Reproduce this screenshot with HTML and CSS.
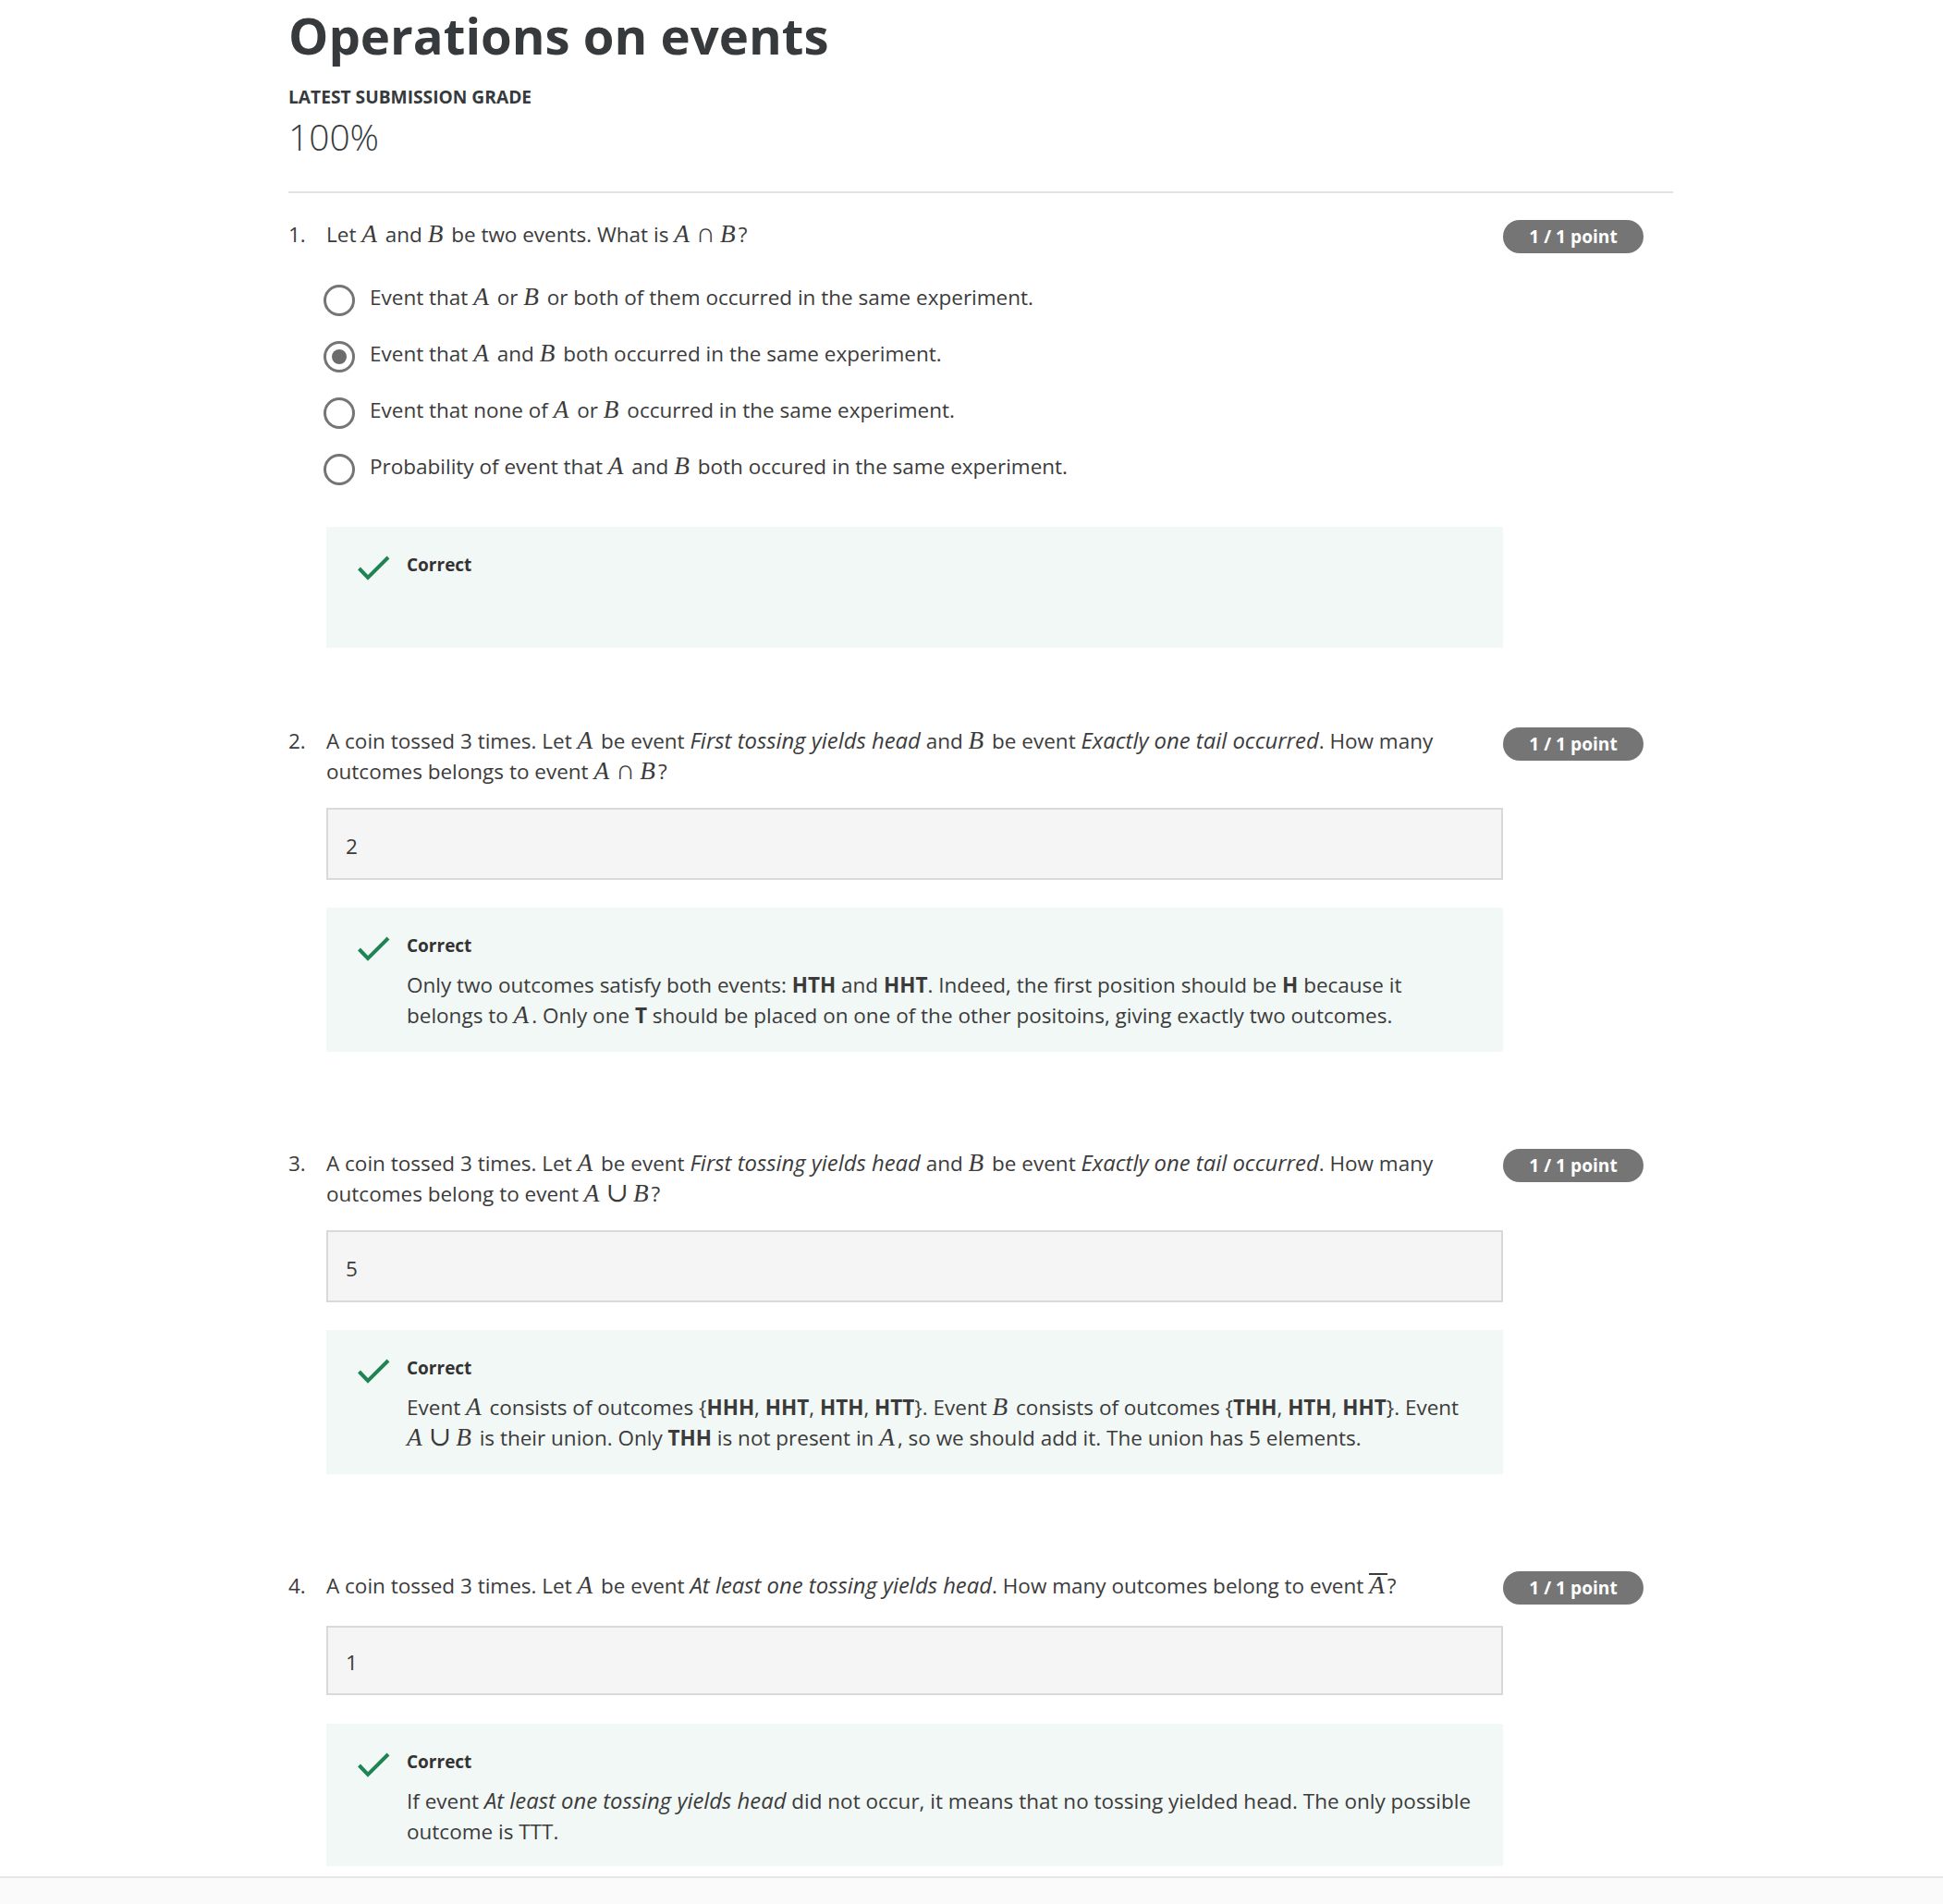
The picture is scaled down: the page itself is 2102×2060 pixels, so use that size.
FILE: index.html
```html
<!DOCTYPE html>
<html lang="en">
<head>
<meta charset="utf-8">
<title>Operations on events</title>
<link rel="stylesheet" href="styles.css">
</head>
<body>
<main class="page">
  <header class="head">
    <h1 class="title">Operations on events</h1>
    <div class="grade-label">LATEST SUBMISSION GRADE</div>
    <div class="grade">100%</div>
  </header>
  <div class="rule"></div>

  <section class="q q-first">
    <div class="qnum">1.</div>
    <div class="qbody">
      <div class="qtext">Let <span class="m">A</span> and <span class="m">B</span> be two events. What is <span class="m">A</span><span class="op">∩</span><span class="m">B</span>?</div>
      <div class="options">
        <div class="opt"><span class="radio"></span><span class="opt-text">Event that <span class="m">A</span> or <span class="m">B</span> or both of them occurred in the same experiment.</span></div>
        <div class="opt"><span class="radio radio-on"></span><span class="opt-text">Event that <span class="m">A</span> and <span class="m">B</span> both occurred in the same experiment.</span></div>
        <div class="opt"><span class="radio"></span><span class="opt-text">Event that none of <span class="m">A</span> or <span class="m">B</span> occurred in the same experiment.</span></div>
        <div class="opt"><span class="radio"></span><span class="opt-text">Probability of event that <span class="m">A</span> and <span class="m">B</span> both occured in the same experiment.</span></div>
      </div>
      <div class="fb fb-first">
        <svg class="check" width="35" height="27" viewBox="0 0 35 27"><polyline points="1.5,14 11,24 33,2" fill="none" stroke="#1f8354" stroke-width="4"/></svg>
        <div class="fb-title">Correct</div>
        <div class="fb-text fb-empty"></div>
      </div>
    </div>
    <div class="badge">1 / 1 point</div>
  </section>

  <section class="q q-second">
    <div class="qnum">2.</div>
    <div class="qbody">
      <div class="qtext">A coin tossed 3 times. Let <span class="m">A</span> be event <em>First tossing yields head</em> and <span class="m">B</span> be event <em>Exactly one tail occurred</em>. How many outcomes belongs to event <span class="m">A</span><span class="op">∩</span><span class="m">B</span>?</div>
      <div class="answer">2</div>
      <div class="fb">
        <svg class="check" width="35" height="27" viewBox="0 0 35 27"><polyline points="1.5,14 11,24 33,2" fill="none" stroke="#1f8354" stroke-width="4"/></svg>
        <div class="fb-title">Correct</div>
        <div class="fb-text">Only two outcomes satisfy both events: <b>HTH</b> and <b>HHT</b>. Indeed, the first position should be <b>H</b> because it belongs to <span class="m">A</span>. Only one <b>T</b> should be placed on one of the other positoins, giving exactly two outcomes.</div>
      </div>
    </div>
    <div class="badge">1 / 1 point</div>
  </section>

  <section class="q">
    <div class="qnum">3.</div>
    <div class="qbody">
      <div class="qtext">A coin tossed 3 times. Let <span class="m">A</span> be event <em>First tossing yields head</em> and <span class="m">B</span> be event <em>Exactly one tail occurred</em>. How many outcomes belong to event <span class="m">A</span><span class="op">∪</span><span class="m">B</span>?</div>
      <div class="answer">5</div>
      <div class="fb">
        <svg class="check" width="35" height="27" viewBox="0 0 35 27"><polyline points="1.5,14 11,24 33,2" fill="none" stroke="#1f8354" stroke-width="4"/></svg>
        <div class="fb-title">Correct</div>
        <div class="fb-text">Event <span class="m">A</span> consists of outcomes {<b>HHH</b>, <b>HHT</b>, <b>HTH</b>, <b>HTT</b>}. Event <span class="m">B</span> consists of outcomes {<b>THH</b>, <b>HTH</b>, <b>HHT</b>}. Event <span class="m">A</span><span class="op">∪</span><span class="m">B</span> is their union. Only <b>THH</b> is not present in <span class="m">A</span>, so we should add it. The union has 5 elements.</div>
      </div>
    </div>
    <div class="badge">1 / 1 point</div>
  </section>

  <section class="q">
    <div class="qnum">4.</div>
    <div class="qbody">
      <div class="qtext">A coin tossed 3 times. Let <span class="m">A</span> be event <em>At least one tossing yields head</em>. How many outcomes belong to event <span class="m m-bar">A</span>?</div>
      <div class="answer answer-last">1</div>
      <div class="fb fb-last">
        <svg class="check" width="35" height="27" viewBox="0 0 35 27"><polyline points="1.5,14 11,24 33,2" fill="none" stroke="#1f8354" stroke-width="4"/></svg>
        <div class="fb-title">Correct</div>
        <div class="fb-text">If event <em>At least one tossing yields head</em> did not occur, it means that no tossing yielded head. The only possible outcome is TTT.</div>
      </div>
    </div>
    <div class="badge">1 / 1 point</div>
  </section>
</main>
<footer class="footer"></footer>
</body>
</html>
```

FILE: styles.css
```css
html, body {
  margin: 0;
  padding: 0;
  background: #ffffff;
}

body {
  font-family: "Open Sans", "Noto Sans", "Liberation Sans", sans-serif;
  color: #3b3b3b;
  font-size: 22.5px;
  line-height: 33px;
}

.page {
  margin-left: 312px;
  width: 1498px;
}

.head {
  padding-top: 5px;
}

.title {
  margin: 0;
  font-size: 54.5px;
  line-height: 67px;
  font-weight: 700;
  color: #373a3c;
}

.grade-label {
  margin-top: 19px;
  font-size: 19.2px;
  line-height: 28px;
  font-weight: 700;
  color: #373a3c;
}

.grade {
  margin-top: 5px;
  font-size: 38.9px;
  line-height: 48px;
  font-weight: 300;
  color: #373a3c;
}

.rule {
  margin-top: 35px;
  height: 2px;
  background: #e2e2e2;
}

.q {
  display: flex;
  align-items: flex-start;
  margin-top: 104px;
}

.q-first {
  margin-top: 28px;
}

.q-second {
  margin-top: 84px;
}

.qnum {
  width: 41px;
  flex: none;
}

.qbody {
  width: 1273px;
  flex: none;
}

.badge {
  flex: none;
  width: 152px;
  height: 36px;
  margin-top: 1px;
  border-radius: 18px;
  background: #757575;
  color: #ffffff;
  font-size: 19.2px;
  line-height: 36px;
  font-weight: 700;
  text-align: center;
}

.q-second .badge {
  margin-top: 2px;
}

.m {
  font-family: "Liberation Serif", "DejaVu Serif", serif;
  font-style: italic;
  font-size: 1.21em;
  line-height: 1;
  padding-right: 3px;
}

.op {
  font-family: "Liberation Serif", "DejaVu Serif", serif;
  font-size: 1.3em;
  line-height: 1;
  padding: 0 5px 0 4px;
}

.m-bar {
  display: inline-block;
  border-top: 2px solid #3b3b3b;
  padding-top: 1px;
  line-height: 0.8;
}

em {
  font-style: italic;
  font-size: 1.06em;
  line-height: 1;
}

b {
  font-weight: 700;
}

.options {
  margin-top: 35px;
}

.opt {
  display: flex;
  align-items: flex-start;
  height: 33px;
  margin-bottom: 28px;
  margin-left: -3px;
}

.opt:last-child {
  margin-bottom: 0;
}

.radio {
  flex: none;
  box-sizing: border-box;
  width: 34px;
  height: 34px;
  margin-top: 3px;
  border: 3px solid #757575;
  border-radius: 50%;
  display: flex;
  align-items: center;
  justify-content: center;
}

.radio-on::after {
  content: "";
  width: 16px;
  height: 16px;
  border-radius: 50%;
  background: #6b6b6b;
}

.opt-text {
  margin-left: 16px;
}

.fb {
  margin-top: 30px;
  background: #f2f8f6;
  padding: 27px 29px 23px 34px;
  display: grid;
  grid-template-columns: 33px 1fr;
  column-gap: 20px;
}

.fb-first {
  margin-top: 49px;
}

.fb-last {
  margin-top: 31px;
  padding-bottom: 21px;
}

.check {
  grid-column: 1;
  grid-row: 1;
  margin-top: 4px;
}

.fb-title {
  grid-column: 2;
  grid-row: 1;
  font-size: 19px;
  line-height: 28px;
  font-weight: 700;
  color: #333333;
}

.fb-text {
  grid-column: 2;
  grid-row: 2;
  margin-top: 9px;
}

.fb-empty {
  height: 41px;
}

.answer {
  margin-top: 23px;
  box-sizing: border-box;
  height: 78px;
  border: 2px solid #d9d9d9;
  background: #f5f5f5;
  padding-left: 19px;
  padding-top: 4px;
  display: flex;
  align-items: center;
}

.answer-last {
  margin-top: 27px;
  height: 75px;
}

.footer {
  margin-top: 11px;
  height: 28px;
  border-top: 2px solid #e6e6e6;
  background: #fafafa;
}
```
